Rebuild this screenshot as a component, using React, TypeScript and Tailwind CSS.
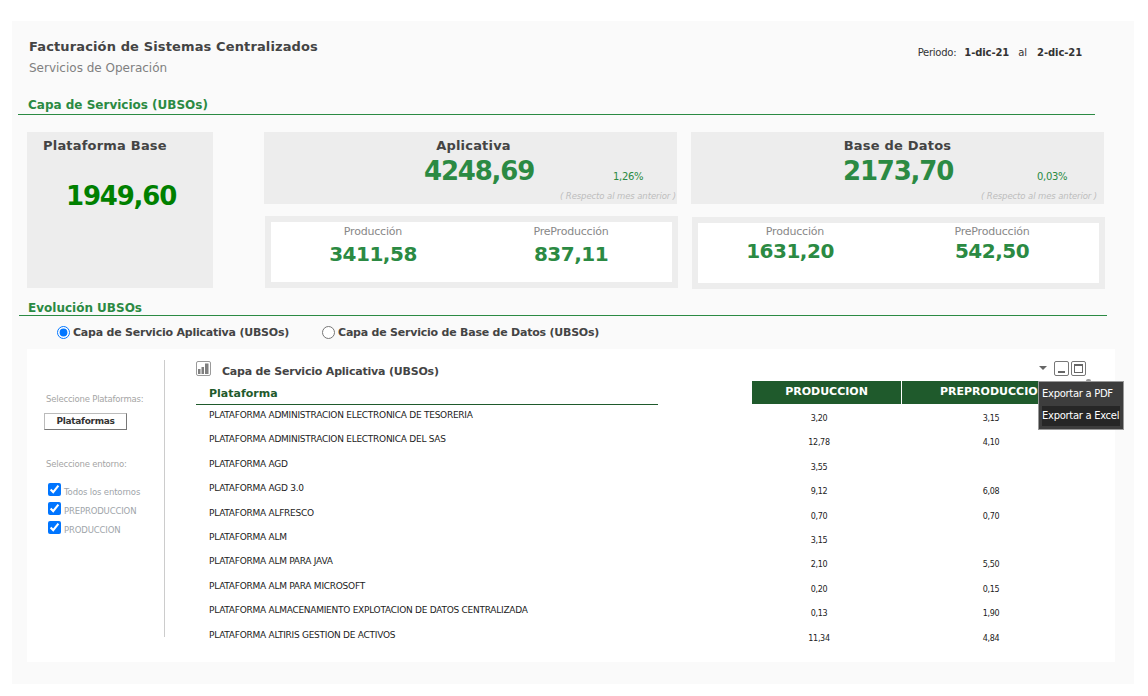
import React from 'react';

const font = "font-['DejaVu_Sans',sans-serif]";

const rows = [
  ['PLATAFORMA ADMINISTRACION ELECTRONICA DE TESORERIA', '3,20', '3,15'],
  ['PLATAFORMA ADMINISTRACION ELECTRONICA DEL SAS', '12,78', '4,10'],
  ['PLATAFORMA AGD', '3,55', ''],
  ['PLATAFORMA AGD 3.0', '9,12', '6,08'],
  ['PLATAFORMA ALFRESCO', '0,70', '0,70'],
  ['PLATAFORMA ALM', '3,15', ''],
  ['PLATAFORMA ALM PARA JAVA', '2,10', '5,50'],
  ['PLATAFORMA ALM PARA MICROSOFT', '0,20', '0,15'],
  ['PLATAFORMA ALMACENAMIENTO EXPLOTACION DE DATOS CENTRALIZADA', '0,13', '1,90'],
  ['PLATAFORMA ALTIRIS GESTION DE ACTIVOS', '11,34', '4,84'],
];

interface SummaryProps {
  title: string;
  value: string;
  pct: string;
  titleClass: string;
  valueClass: string;
  noteClass: string;
}

const Summary: React.FC<SummaryProps> = ({ title, value, pct, titleClass, valueClass, noteClass }) => (
  <div className="h-[72px] w-[413px] bg-[#ededed] pt-[6px]">
    <div className={`text-center text-[13px] leading-[16px] font-bold tracking-[0.2px] text-[#444] ${titleClass}`}>{title}</div>
    <div className="mt-[1px] flex h-[32px] items-center">
      <div className={`text-[26px] leading-[32px] font-bold tracking-[-1.2px] text-[#2b8a43] ${valueClass}`}>{value}</div>
      <div className="mt-[10px] text-[10px] tracking-[-0.3px] text-[#2b8a43]">{pct}</div>
    </div>
    <div className={`mt-[4px] text-right text-[8.5px] leading-[11px] tracking-[-0.1px] text-[#bdbdbd] italic ${noteClass}`}>
      ( Respecto al mes anterior )
    </div>
  </div>
);

interface SplitProps {
  prod: string;
  pre: string;
  colsClass: string;
  valueClass: string;
  prodClass: string;
  className: string;
}

const Split: React.FC<SplitProps> = ({ prod, pre, colsClass, valueClass, prodClass, className }) => (
  <div className={`h-[72px] w-[413px] border-[6px] border-[#ededed] bg-white ${className}`}>
    <div className={`grid ${colsClass} text-center`}>
      <div>
        <div className="text-[11px] leading-[16px] tracking-[-0.2px] text-[#888]">Producción</div>
        <div className={`text-[20px] font-bold tracking-[-0.5px] text-[#2b8a43] ${valueClass} ${prodClass}`}>{prod}</div>
      </div>
      <div>
        <div className="text-[11px] leading-[16px] tracking-[-0.2px] text-[#888]">PreProducción</div>
        <div className={`text-[20px] font-bold tracking-[-0.5px] text-[#2b8a43] ${valueClass}`}>{pre}</div>
      </div>
    </div>
  </div>
);

const EnvCheck: React.FC<{ label: string }> = ({ label }) => (
  <label className="flex h-[19px] items-center pl-[21px]">
    <input type="checkbox" defaultChecked className="m-0 h-[13px] w-[13px]" />
    <span className="mt-[6px] ml-[3px] text-[8.5px] tracking-[-0.15px] text-[#a0a5aa]">{label}</span>
  </label>
);

export default function App() {
  return (
    <div className={`h-[696px] w-[1148px] overflow-hidden bg-white pt-[21px] pl-[12px] ${font}`}>
      <div className="h-[663px] w-[1122px] bg-[#fafafa] pt-[18px]">
        {/* cabecera */}
        <div className="flex justify-between pr-[52px] pl-[17px]">
          <div>
            <div className="text-[13px] leading-[16px] font-bold tracking-[0.13px] text-[#444]">Facturación de Sistemas Centralizados</div>
            <div className="mt-[5px] text-[12px] leading-[16px] text-[#808080]">Servicios de Operación</div>
          </div>
          <div className="mt-[7px] flex text-[10px] leading-[14px] text-[#333]">
            <span className="tracking-[-0.25px]">Periodo:</span>
            <span className="ml-[8px] font-bold tracking-[-0.1px]">1-dic-21</span>
            <span className="ml-[9px]">al</span>
            <span className="ml-[10px] font-bold tracking-[-0.1px]">2-dic-21</span>
          </div>
        </div>

        <div className="mt-[21px] ml-[6px] w-[1077px] border-b border-[#2b8a43] pb-[1px] pl-[10px] text-[12px] leading-[16px] font-bold text-[#2b8a43]">
          Capa de Servicios (UBSOs)
        </div>

        {/* resumen */}
        <div className="mt-[17px] flex pl-[15px]">
          <div className="h-[156px] w-[186px] bg-[#ededed] pt-[6px] pl-[16px]">
            <div className="text-[13px] leading-[16px] font-bold tracking-[0.2px] text-[#444]">Plataforma Base</div>
            <div className="mt-[24px] pl-[23px] text-[26px] leading-[36px] font-bold tracking-[-1.2px] text-[#008000]">1949,60</div>
          </div>
          <div className="ml-[51px] flex flex-col">
            <Summary title="Aplicativa" value="4248,69" pct="1,26%" titleClass="pl-[6px]" valueClass="ml-[160px] w-[189px]" noteClass="pr-[1px]" />
            <Split prod="3411,58" pre="837,11" colsClass="pt-[2px] grid-cols-[204px_192px]" valueClass="leading-[28px]" prodClass="" className="mt-[12px] ml-[1px]" />
          </div>
          <div className="ml-[13px] flex flex-col">
            <Summary title="Base de Datos" value="2173,70" pct="0,03%" titleClass="" valueClass="ml-[152px] w-[194px]" noteClass="pr-[7px]" />
            <Split prod="1631,20" pre="542,50" colsClass="pt-[1px] grid-cols-[194px_200px]" valueClass="leading-[22px]" prodClass="pr-[10px]" className="mt-[13px] ml-[1px]" />
          </div>
        </div>

        <div className="mt-[12px] ml-[7px] w-[1088px] border-b border-[#2b8a43] pl-[9px] text-[12px] leading-[14px] font-bold text-[#2b8a43]">
          Evolución UBSOs
        </div>

        <div className="mt-[7px] flex h-[19px] items-center pl-[45px] text-[11px] font-bold tracking-[-0.22px] text-[#444]">
          <label className="flex items-center">
            <input type="radio" name="capa" defaultChecked className="m-0 h-[13px] w-[13px]" />
            <span className="mt-[2px] ml-[3px]">Capa de Servicio Aplicativa (UBSOs)</span>
          </label>
          <label className="ml-[33px] flex items-center">
            <input type="radio" name="capa" className="m-0 h-[13px] w-[13px]" />
            <span className="mt-[2px] ml-[3px]">Capa de Servicio de Base de Datos (UBSOs)</span>
          </label>
        </div>

        {/* panel blanco */}
        <div className="relative mt-[7px] ml-[15px] flex h-[313px] w-[1088px] bg-white pt-[11px]">
          <div className="h-[277px] w-[138px] border-r border-[#cccccc]">
            <div className="mt-[33px] pl-[19px] text-[8.5px] leading-[12px] tracking-[-0.2px] text-[#a5a5a5]">Seleccione Plataformas:</div>
            <div className="mt-[8px] ml-[17px] flex h-[17px] w-[83px] items-center justify-center border border-[#bbbbbb] border-r-[#777777] border-b-[#777777] bg-white text-[9px] font-bold tracking-[-0.3px] text-[#333]">
              Plataformas
            </div>
            <div className="mt-[28px] pl-[19px] text-[8.5px] leading-[12px] tracking-[-0.2px] text-[#a5a5a5]">Seleccione entorno:</div>
            <div className="mt-[10px]">
              <EnvCheck label="Todos los entornos" />
              <EnvCheck label="PREPRODUCCION" />
              <EnvCheck label="PRODUCCION" />
            </div>
          </div>

          <div className="w-[950px] pl-[31px]">
            <div className="flex h-[21px] items-center justify-between pt-[2px] pr-[29px]">
              <div className="flex items-center">
                <svg width="15" height="15" viewBox="0 0 15 15" className="-mt-[6px]">
                  <rect x="0.5" y="0.5" width="14" height="14" rx="1.5" fill="#fff" stroke="#9a9a9a" />
                  <rect x="2" y="8" width="2.5" height="5" fill="#7f7f7f" />
                  <rect x="5.5" y="6" width="2.5" height="7" fill="#7f7f7f" />
                  <rect x="9" y="2.5" width="3.5" height="10.5" fill="#7f7f7f" />
                </svg>
                <span className="mt-[2px] ml-[11px] text-[11px] font-bold tracking-[-0.2px] text-[#444]">Capa de Servicio Aplicativa (UBSOs)</span>
              </div>
              <div className="-mt-[7px] flex items-center">
                <span className="mr-[7px] h-0 w-0 border-x-[4px] border-t-[4px] border-x-transparent border-t-[#666]" />
                <span className="flex h-[15px] w-[15px] items-end justify-center rounded-[2px] border border-[#777] pb-[2px]">
                  <span className="h-[2px] w-[7px] bg-[#666]" />
                </span>
                <span className="ml-[2px] flex h-[15px] w-[15px] items-center justify-center rounded-[2px] border border-[#777]">
                  <span className="h-[9px] w-[9px] border border-t-2 border-[#666]" />
                </span>
              </div>
            </div>

            {/* cabecera tabla */}
            <div className="flex h-[24px]">
              <div className="h-[24px] w-[462px] border-b border-[#1f5a2c] pl-[13px] text-[11px] leading-[26px] font-bold text-[#1f5a2c]">Plataforma</div>
              <div className="ml-[94px] flex h-[23px] w-[149px] items-center justify-center bg-[#1f5a2c] text-[11px] font-bold text-white">PRODUCCION</div>
              <div className="ml-[1px] flex h-[23px] w-[183px] items-center overflow-hidden bg-[#1f5a2c] pl-[38px] text-[11px] font-bold whitespace-nowrap text-white">PREPRODUCCION</div>
            </div>

            {rows.map((r) => (
              <div key={r[0]} className="grid h-[24.4px] grid-cols-[556px_134px_210px] text-[#222]">
                <div className="pt-[3px] pl-[13px] text-[9px] leading-[14px] tracking-[-0.26px] whitespace-nowrap">{r[0]}</div>
                <div className="pt-[7px] text-center text-[8px] leading-[14px] tracking-[-0.3px]">{r[1]}</div>
                <div className="pt-[7px] text-center text-[8px] leading-[14px] tracking-[-0.3px]">{r[2]}</div>
              </div>
            ))}
          </div>

          {/* menu exportar */}
          <div className="absolute top-[30px] left-[1059px] h-[2px] w-[5px] rounded-t-[2px] bg-[#999]" />
          <div className="absolute top-[32px] left-[1011px] h-[49px] w-[86px] border border-[#999] bg-[#3d3d3d] pt-[1px] pl-[3px] text-[10px] leading-[22px] tracking-[-0.3px] whitespace-nowrap text-white">
            <div className="h-[23px]">Exportar a PDF</div>
            <div className="h-[20px] w-[78px] bg-[#262626] leading-[20px]">Exportar a Excel</div>
          </div>
        </div>
      </div>
    </div>
  );
}
